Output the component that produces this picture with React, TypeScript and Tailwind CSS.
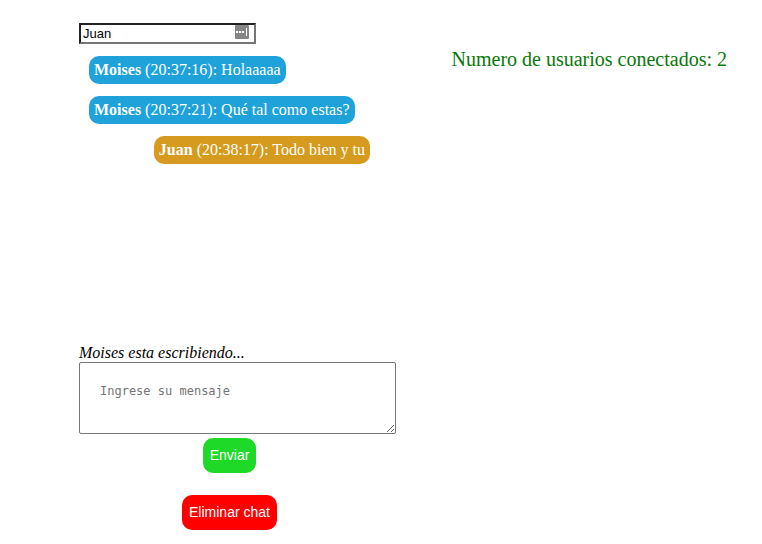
import React from "react";

const messages = [
  { author: "Moises", time: "20:37:16", text: "Holaaaaa", own: false },
  { author: "Moises", time: "20:37:21", text: "Qué tal como estas?", own: false },
  { author: "Juan", time: "20:38:17", text: "Todo bien y tu", own: true },
];

export default function App() {
  return (
    <div className="flex items-start justify-between bg-white pl-[79px] pr-[35px] pt-[23px] font-['Liberation_Serif',serif] text-[16px] leading-[18px] text-black">
      <main className="w-[317px]">
        <div className="grid w-[177px] items-center">
          <input
            aria-label="Nombre"
            defaultValue="Juan"
            className="col-start-1 row-start-1 h-[21px] w-full border-2 border-t-[#222] border-l-[#222] border-r-[#767676] border-b-[#767676] px-[2px] font-['Liberation_Sans',sans-serif] text-[13px] outline-none"
          />
          <svg className="col-start-1 row-start-1 mr-[7px] mb-1 justify-self-end" width="14" height="14" viewBox="0 0 14 14" aria-hidden="true">
            <rect width="14" height="14" rx="1" fill="#858585" />
            <path d="M1 6h2v2H1zM4 6h2v2H4zM7 6h2v2H7zM11 3h1v8h-1z" fill="white" />
          </svg>
        </div>
        <ul className="flex h-[300px] w-[301px] flex-col gap-3 px-[10px] pt-3">
          {messages.map((m) => (
            <li
              key={m.time}
              className={
                m.own
                  ? "self-end rounded-[10px] bg-[#d69a1e] p-[5px] text-white"
                  : "self-start rounded-[10px] bg-[#1ea2d9] p-[5px] text-white"
              }
            >
              <strong>{m.author}</strong> ({m.time}): {m.text}
            </li>
          ))}
        </ul>
        <p className="italic">Moises esta escribiendo...</p>
        <textarea
          aria-label="Mensaje"
          placeholder="Ingrese su mensaje"
          className="block h-[72px] w-full rounded-[2px] border border-[#767676] p-5 font-['DejaVu_Sans_Mono',monospace] text-[12px] leading-[16px] outline-none placeholder:text-[#757575]"
        />
        <div className="flex w-[301px] flex-col items-center gap-[22px] pt-1 font-['Liberation_Sans',sans-serif] text-[14px] text-white">
          <button className="h-[35px] rounded-[10px] bg-[#1ed928] px-[7px] pb-[2px]">Enviar</button>
          <button className="h-[35px] rounded-[10px] bg-[#ff0000] px-[7px] pb-[2px]">Eliminar chat</button>
        </div>
      </main>
      <p className="pt-[25px] text-[20px] leading-[23px] text-[#087808]">Numero de usuarios conectados: 2</p>
    </div>
  );
}
